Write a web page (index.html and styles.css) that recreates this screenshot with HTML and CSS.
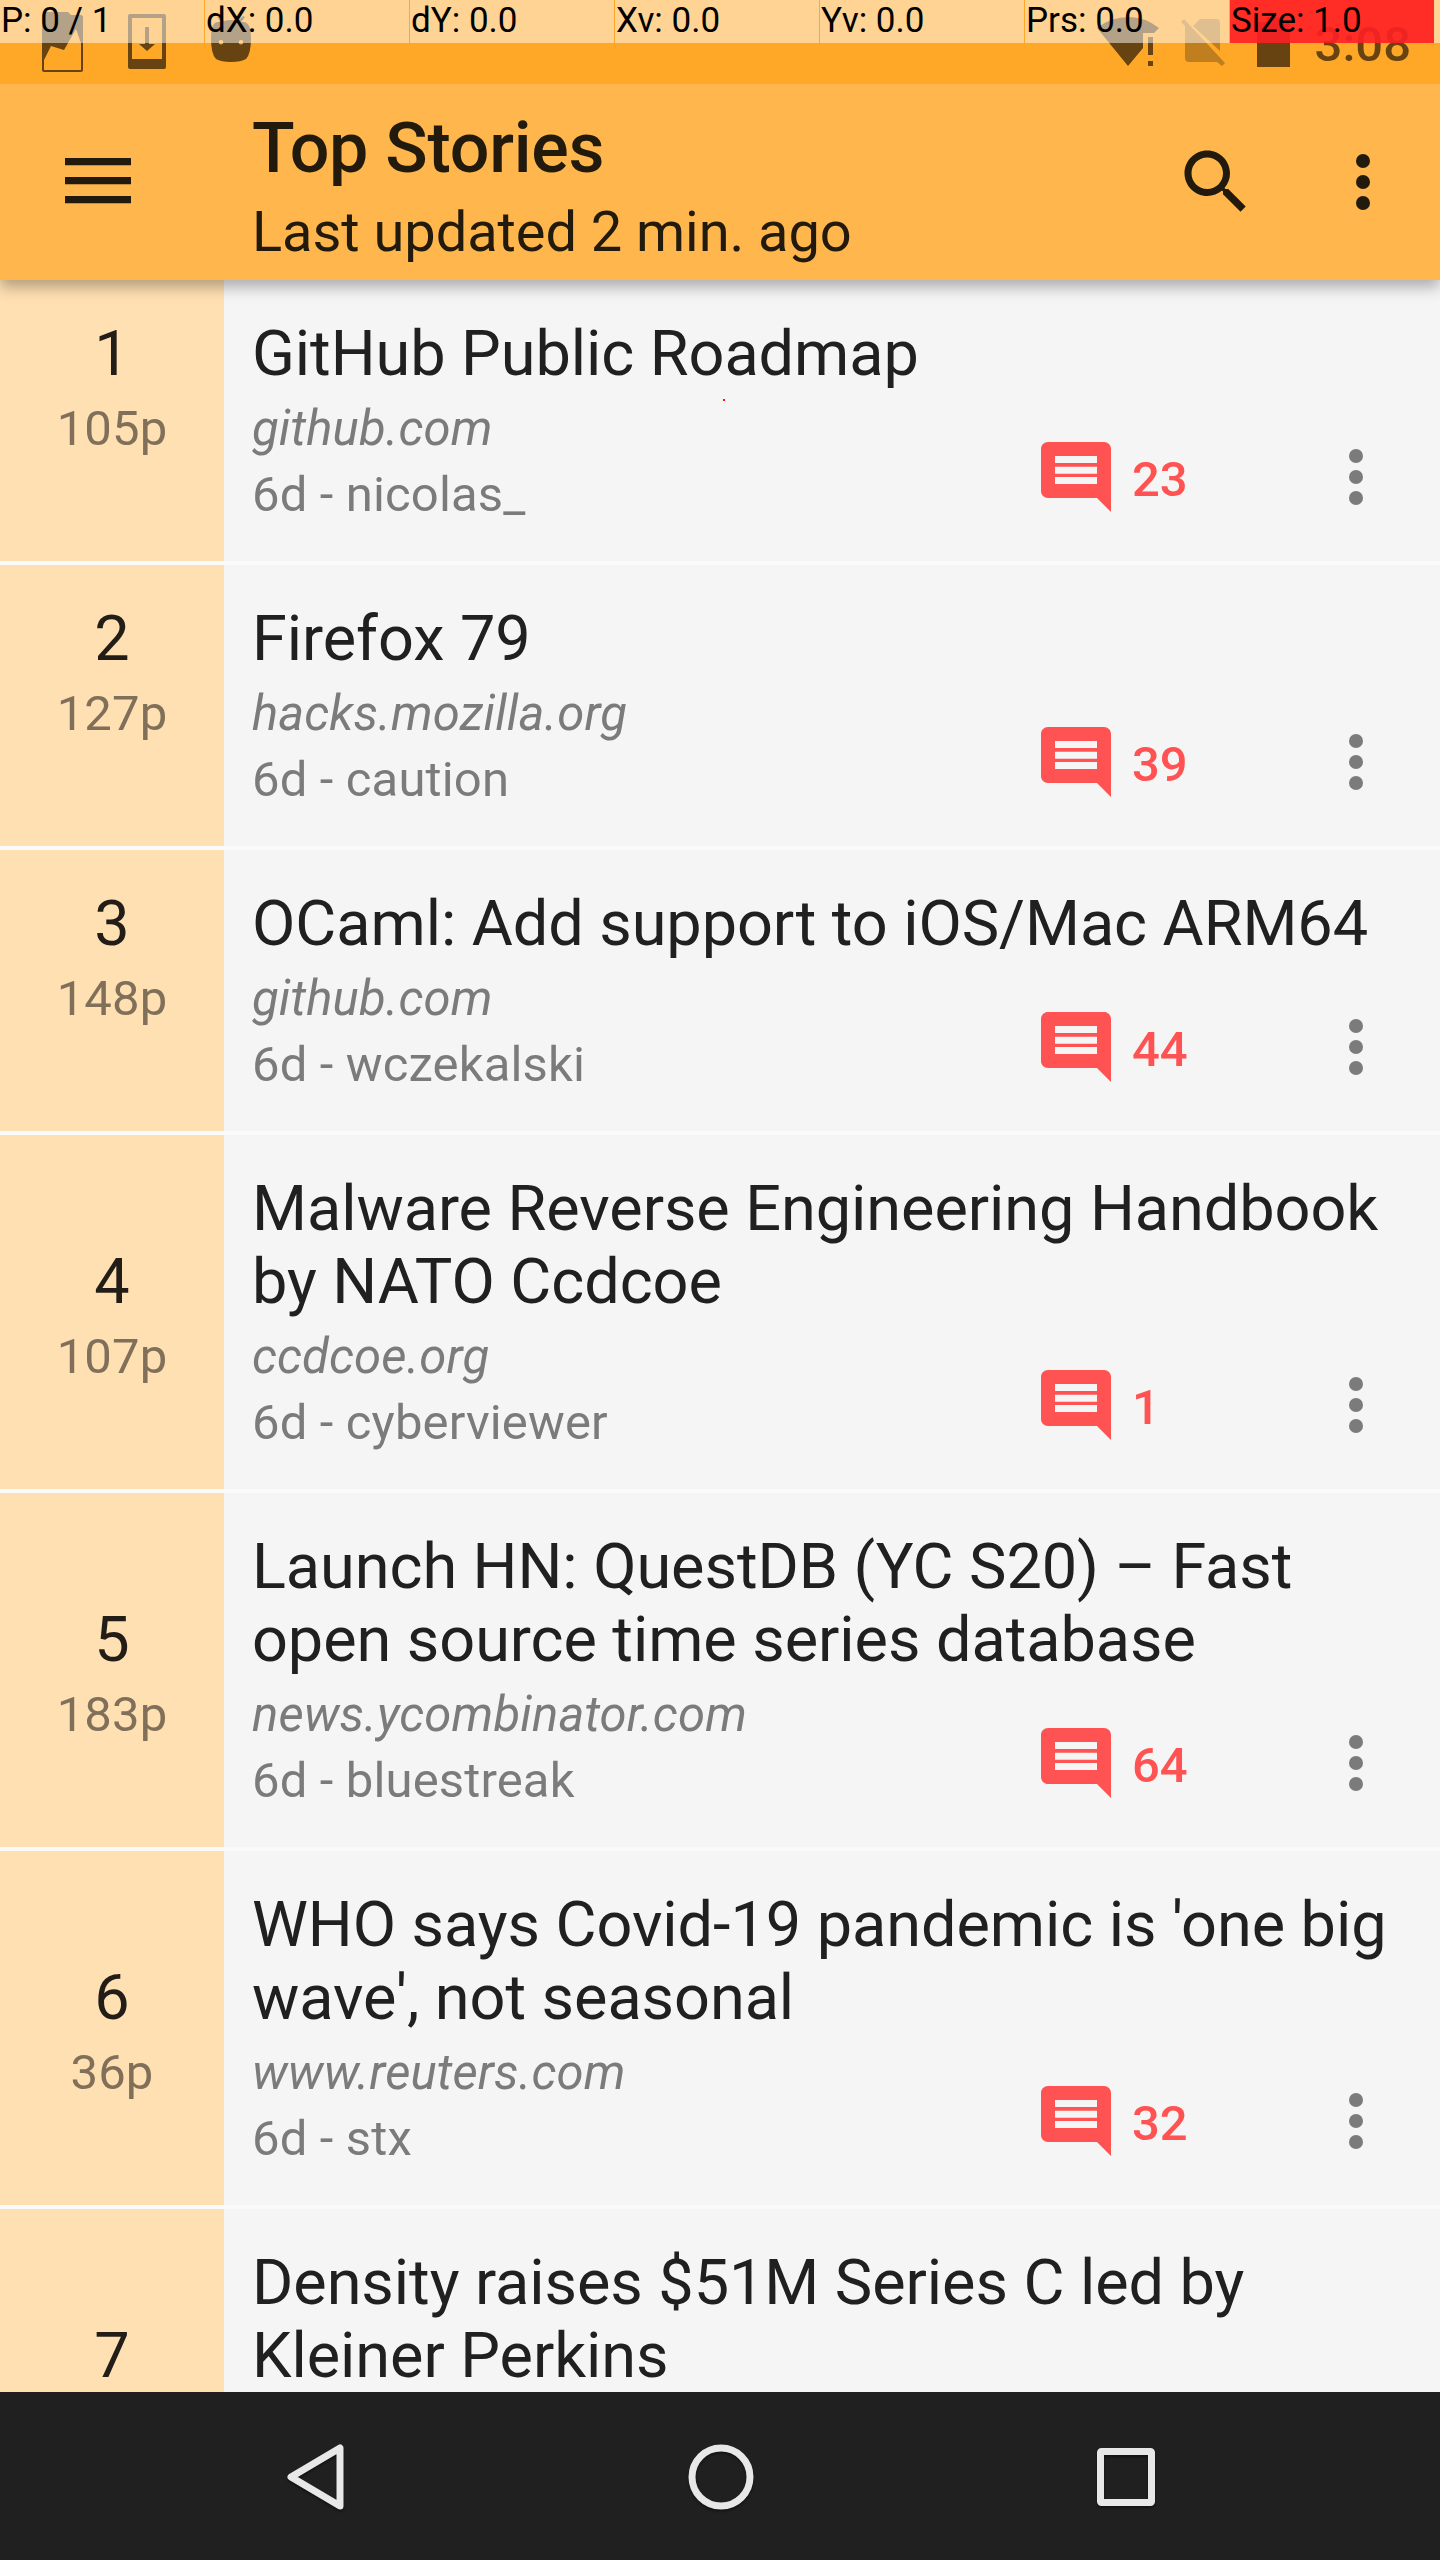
FILE: index.html
```html
<!DOCTYPE html>
<html lang="en">
<head>
<meta charset="utf-8">
<title>Top Stories</title>
<link rel="stylesheet" href="styles.css">
</head>
<body>
<svg class="defs" width="0" height="0" aria-hidden="true">
  <symbol id="comment" viewBox="0 0 24 24"><path d="M22 4c0-1.100-.9-2-2-2H4c-1.100 0-2 .9-2 2v12c0 1.100.9 2 2 2h14l4 4zM18 14H6v-2h12zm0-2.950H6V9.050h12zM18 8H6V6h12z"/></symbol>
  <symbol id="more" viewBox="0 0 24 24"><circle cx="12" cy="6" r="2"/><circle cx="12" cy="12" r="2"/><circle cx="12" cy="18" r="2"/></symbol>
</svg>
<div class="screen">
  <div class="status">
    <div class="status-left">
      <svg width="42" height="61" viewBox="0 0 42 61"><path fill-rule="evenodd" d="M3 0H26L29 3H39Q41 3 41 5V58Q41 60 39 60H2Q0 60 0 58V5Q0 0 3 0ZM34 17L22 38L9 34L2 48V58H39V31Z"/></svg>
      <svg width="38" height="56" viewBox="0 0 38 56"><path fill-rule="evenodd" d="M2 0H36Q38 0 38 2V53Q38 55 36 55H2Q0 55 0 53V2Q0 0 2 0ZM4 4V45H34V4ZM17 13H21V30H27L19 37L11 30H17Z"/></svg>
      <svg width="40" height="46" viewBox="0 0 40 46"><path fill-rule="evenodd" d="M0 22Q0 6 7 6L10 6 6 1 8 0 13 5Q20 3 27 5L32 0 34 1 30 6 33 6Q40 7 40 22Q40 38 35 43Q30 46 20 46Q10 46 5 43Q0 38 0 22ZM10 24A2.300 2.300 0 1 0 10 28.600A2.300 2.300 0 1 0 10 24ZM30 24A2.300 2.300 0 1 0 30 28.600A2.300 2.300 0 1 0 30 24Z"/></svg>
    </div>
    <div class="status-right">
      <svg width="62" height="50" viewBox="0 0 62 50"><path d="M0 11Q14 0 32 0Q48 0 62 11L57 16H46V31L31 49ZM51 20H56V38H51ZM51 44H56V49H51Z"/></svg>
      <svg class="faded" width="48" height="50" viewBox="0 0 48 50"><path d="M14 9L21 2H37Q41 2 41 6V34ZM2 5L5 2L46 46L43 49L38 45H10Q6 45 6 41V9Z"/></svg>
      <svg width="33" height="50" viewBox="0 0 33 50"><path d="M0 5H10V0H22V5H33V50H0Z"/></svg>
      <span class="clock">3:08</span>
    </div>
    <div class="pointer-bar">
      <span>P: 0 / 1</span><span>dX: 0.0</span><span>dY: 0.0</span><span>Xv: 0.0</span><span>Yv: 0.0</span><span>Prs: 0.0</span><span class="hot">Size: 1.0</span><i></i>
    </div>
  </div>
  <header class="appbar">
    <svg class="menu" width="66" height="46" viewBox="0 0 66 46"><path d="M0 0H66V7.300H0ZM0 19H66V26.300H0ZM0 38H66V45.300H0Z"/></svg>
    <div class="heading">
      <h1>Top Stories</h1>
      <p>Last updated 2 min. ago</p>
    </div>
    <svg class="search" width="84" height="84" viewBox="0 0 24 24"><path d="M15.500 14h-.79l-.28-.27C15.410 12.590 16 11.110 16 9.500 16 5.910 13.090 3 9.500 3S3 5.910 3 9.500 5.910 16 9.500 16c1.610 0 3.090-.59 4.230-1.570l.27.28v.79l5 4.990L20.490 19l-4.990-5zm-6 0C7.010 14 5 11.990 5 9.500S7.010 5 9.500 5 14 7.010 14 9.500 11.990 14 9.500 14z"/></svg>
    <svg class="overflow" width="84" height="84"><use href="#more"/></svg>
  </header>
  <main class="list">
    <article class="story"><div class="rank"><b>1</b><span>105p</span></div><div class="body"><h2>GitHub Public Roadmap</h2><em>github.com</em><span>6d - nicolas_</span></div><div class="comments"><svg><use href="#comment"/></svg><span>23</span></div><svg class="more"><use href="#more"/></svg></article>
    <article class="story"><div class="rank"><b>2</b><span>127p</span></div><div class="body"><h2>Firefox 79</h2><em>hacks.mozilla.org</em><span>6d - caution</span></div><div class="comments"><svg><use href="#comment"/></svg><span>39</span></div><svg class="more"><use href="#more"/></svg></article>
    <article class="story"><div class="rank"><b>3</b><span>148p</span></div><div class="body"><h2>OCaml: Add support to iOS/Mac ARM64</h2><em>github.com</em><span>6d - wczekalski</span></div><div class="comments"><svg><use href="#comment"/></svg><span>44</span></div><svg class="more"><use href="#more"/></svg></article>
    <article class="story"><div class="rank"><b>4</b><span>107p</span></div><div class="body"><h2>Malware Reverse Engineering Handbook<br>by NATO Ccdcoe</h2><em>ccdcoe.org</em><span>6d - cyberviewer</span></div><div class="comments"><svg><use href="#comment"/></svg><span>1</span></div><svg class="more"><use href="#more"/></svg></article>
    <article class="story"><div class="rank"><b>5</b><span>183p</span></div><div class="body"><h2>Launch HN: QuestDB (YC S20) – Fast<br>open source time series database</h2><em>news.ycombinator.com</em><span>6d - bluestreak</span></div><div class="comments"><svg><use href="#comment"/></svg><span>64</span></div><svg class="more"><use href="#more"/></svg></article>
    <article class="story"><div class="rank"><b>6</b><span>36p</span></div><div class="body"><h2>WHO says Covid-19 pandemic is 'one big<br>wave', not seasonal</h2><em>www.reuters.com</em><span>6d - stx</span></div><div class="comments"><svg><use href="#comment"/></svg><span>32</span></div><svg class="more"><use href="#more"/></svg></article>
    <article class="story cut"><div class="rank"><b>7</b></div><div class="body"><h2>Density raises $51M Series C led by<br>Kleiner Perkins</h2></div></article>
  </main>
  <nav class="navbar">
    <svg width="84" height="84" viewBox="0 0 84 84"><path d="M66 13V71L17 42Z"/></svg>
    <svg width="84" height="84" viewBox="0 0 84 84"><circle cx="42" cy="42" r="29"/></svg>
    <svg width="84" height="84" viewBox="0 0 84 84"><rect x="16.500" y="16.500" width="51" height="51" rx="1"/></svg>
  </nav>
  <i class="touch-dot"></i>
</div>
</body>
</html>
```
FILE: styles.css
```css
* { box-sizing: border-box; margin: 0; padding: 0; }
body { font-family: Roboto, sans-serif; color: #202020; background: #fafafa; }
svg { display: block; flex: none; }
.defs { position: absolute; }
.screen { position: relative; width: 1440px; height: 2560px; display: flex; flex-direction: column; overflow: hidden; }

.status { position: relative; z-index: 3; flex: none; height: 84px; display: flex; justify-content: space-between; background: #ffa726; }
.status svg { fill: #664310; }
.status .faded { fill: #bf7f1e; }
.status-left { display: flex; align-items: flex-start; padding: 12px 0 0 42px; gap: 44px; }
.status-left svg:nth-child(2) { margin: 2px 1px 0 0; }
.status-left svg:nth-child(3) { margin-top: 4px; }
.status-right { display: flex; align-items: flex-start; padding: 17px 29px 0 0; }
.status-right svg:nth-child(1) { margin-right: 20px; }
.status-right svg:nth-child(2) { margin-right: 30px; }
.status-right svg:nth-child(3) { margin-right: 1px; }
.clock { font-size: 49px; font-weight: 500; line-height: 56px; color: #664310; margin-left: 24px; }
.pointer-bar { position: absolute; inset: 0 0 auto 0; height: 43px; display: flex; gap: 1px; font-size: 35px; line-height: 42px; color: #000; }
.pointer-bar span { width: 204px; flex: none; padding-left: 1px; background: rgba(255, 255, 255, .5); white-space: nowrap; }
.pointer-bar .hot { background: rgba(255, 32, 38, .9); }
.pointer-bar i { flex: 1; margin-left: -1px; background: rgba(255, 255, 255, .5); }

.appbar { position: relative; z-index: 2; flex: none; height: 196px; display: flex; align-items: flex-start; background: #ffb74d; color: #221a0c; box-shadow: 0 7px 14px rgba(0, 0, 0, .3); }
.appbar svg { fill: #221a0c; }
.menu { margin: 73.700px 0 0 65px; }
.heading { flex: 1; margin-left: 121px; padding-top: 23px; white-space: nowrap; }
.heading h1 { font-size: 70px; font-weight: 500; line-height: 82px; letter-spacing: -.25px; }
.heading p { font-size: 56px; line-height: 66px; margin-top: 10px; letter-spacing: -.06px; }
.search { margin-top: 56px; }
.overflow { margin: 56px 35px 0 63.500px; }

.list { flex: 1; min-height: 0; overflow: hidden; display: flex; flex-direction: column; gap: 4px; background: #fafafa; }
.story { flex: none; display: flex; align-items: flex-end; background: #f5f5f5; }
.rank { align-self: stretch; width: 224px; display: flex; flex-direction: column; justify-content: flex-end; align-items: center; padding-bottom: 99px; background: #ffe0b2; }
.rank b { font-size: 63px; font-weight: 400; line-height: 73px; color: #221d17; }
.rank span { font-size: 49px; line-height: 66px; margin-top: 6px; color: #80705a; letter-spacing: .15px; }
.body { flex: 1; width: 0; padding: 37px 0 33px 28px; white-space: nowrap; }
.body h2 { font-size: 63px; font-weight: 400; line-height: 73px; margin-bottom: 6px; letter-spacing: -.06px; }
.body em, .body span { display: block; font-size: 49px; line-height: 66px; color: #7b7b7b; letter-spacing: .15px; }
.comments { width: 166px; margin-right: 114px; display: flex; align-items: center; gap: 14px; font-size: 49px; font-weight: 500; line-height: 84px; height: 84px; margin-bottom: 42px; color: #ff5252; }
.comments span { padding-top: 5px; }
.comments svg, .more { width: 84px; height: 84px; }
.comments svg { fill: #ff5252; }
.more { fill: #7b7b7b; margin: 0 42px 42px 0; }
.cut .rank { padding-bottom: 171px; }
.cut .body { padding-bottom: 165px; }

.navbar { flex: none; height: 168px; padding: 1px 0 0 1px; display: flex; justify-content: center; align-items: center; gap: 321px; background: #202020; }
.navbar svg { fill: none; stroke: #e8e8e8; stroke-width: 7px; stroke-linejoin: round; filter: drop-shadow(0 2px 1px rgba(0, 0, 0, .4)); }
.touch-dot { position: absolute; left: 723px; top: 399px; width: 2px; height: 2px; background: #ff1010; z-index: 4; }
```
